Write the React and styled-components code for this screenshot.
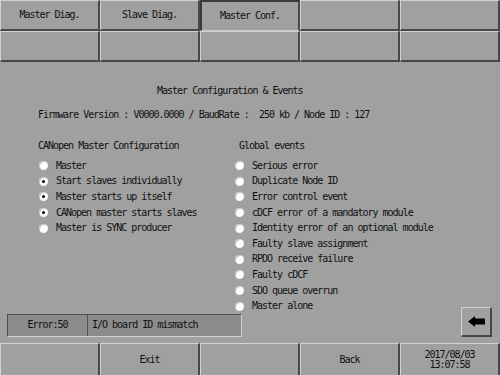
import React from 'react';
import styled, { createGlobalStyle } from 'styled-components';

const GlobalStyle = createGlobalStyle`
  body {
    margin: 0;
    background: #a0a0a0;
  }
`;

const Screen = styled.div`
  width: 500px;
  height: 375px;
  display: flex;
  flex-direction: column;
  overflow: hidden;
  background: #a0a0a0;
  color: #101010;
  font-family: "DejaVu Sans Mono", "Liberation Mono", monospace;
  font-size: 10px;
  letter-spacing: -1px;
`;

const ButtonGrid = styled.div`
  display: grid;
  grid-template-columns: repeat(5, 100px);
  grid-auto-rows: ${(p) => p.$rowHeight}px;
`;

const PanelButton = styled.div`
  box-sizing: border-box;
  display: flex;
  flex-direction: column;
  align-items: center;
  justify-content: center;
  line-height: 10px;
  background: #a0a0a0;
  border-style: solid;
  border-width: 1px 2px 2px 1px;
  border-color: #d2d2d2 #484848 #484848 #d2d2d2;
  ${(p) =>
    p.$active &&
    `
    border-width: 2px 2px 1px 2px;
    border-color: #3a3a3a #484848 #c8c8c8 #3a3a3a;
  `}
  ${(p) => p.$open && `border-bottom-width: 0;`}
`;

const Main = styled.div`
  flex: 1;
  display: flex;
  flex-direction: column;
  padding-top: 23px;
  line-height: 12px;
`;

const Title = styled.div`
  padding-left: 157px;
`;

const InfoLine = styled.div`
  margin-top: 12px;
  padding-left: 38px;
  white-space: pre;
`;

const Columns = styled.div`
  margin-top: 19px;
  display: grid;
  grid-template-columns: 197px 1fr;
  padding-left: 38px;
`;

const Header = styled.div`
  padding-left: ${(p) => p.$indent || 0}px;
  margin-bottom: 6px;
`;

const RadioList = styled.div`
  display: flex;
  flex-direction: column;
  padding-left: ${(p) => p.$indent || 0}px;
`;

const RadioRow = styled.div`
  height: 15.6px;
  display: flex;
  align-items: center;
  gap: 8px;
`;

const Radio = styled.span`
  box-sizing: border-box;
  width: 9px;
  height: 9px;
  border-radius: 50%;
  background: #fdfdfd;
  box-shadow: inset 1px 1px 0 #c4c4c4;
  display: flex;
  align-items: center;
  justify-content: center;
  flex-shrink: 0;

  &::after {
    content: '';
    width: 3px;
    height: 3px;
    border-radius: 50%;
    background: ${(p) => (p.$checked ? '#000' : 'transparent')};
  }
`;

const Footer = styled.div`
  margin-top: -7px;
  display: flex;
  align-items: flex-end;
  padding-left: 7px;
  padding-right: 8px;
`;

const ErrorBox = styled.div`
  box-sizing: border-box;
  width: 235px;
  height: 23px;
  display: grid;
  grid-template-columns: 79px 1fr;
  background: #8b8b8b;
  border-style: solid;
  border-width: 1px;
  border-color: #505050 #d0d0d0 #d0d0d0 #505050;
`;

const ErrorCell = styled.div`
  display: flex;
  align-items: center;
  justify-content: ${(p) => (p.$center ? 'center' : 'flex-start')};
  padding-left: ${(p) => (p.$center ? 0 : 4)}px;
  border-left: ${(p) => (p.$center ? 'none' : '1px solid #505050')};
`;

const ArrowButton = styled.div`
  box-sizing: border-box;
  margin-left: auto;
  width: 31px;
  height: 30px;
  display: flex;
  align-items: center;
  justify-content: center;
  background: #a0a0a0;
  border-style: solid;
  border-width: 1px 2px 2px 1px;
  border-color: #d2d2d2 #484848 #484848 #d2d2d2;
`;

const leftOptions = [
  ['Master', false],
  ['Start slaves individually', true],
  ['Master starts up itself', true],
  ['CANopen master starts slaves', true],
  ['Master is SYNC producer', false],
];

const globalEvents = [
  'Serious error',
  'Duplicate Node ID',
  'Error control event',
  'cDCF error of a mandatory module',
  'Identity error of an optional module',
  'Faulty slave assignment',
  'RPDO receive failure',
  'Faulty cDCF',
  'SDO queue overrun',
  'Master alone',
];

const App = () => {
  const tabs = ['Master Diag.', 'Slave Diag.', 'Master Conf.', '', ''];

  return (
    <Screen>
      <GlobalStyle />
      <ButtonGrid $rowHeight={31}>
        {tabs.map((t, i) => (
          <PanelButton key={i} $active={i === 2}>
            {t}
          </PanelButton>
        ))}
        {[0, 1, 2, 3, 4].map((i) => (
          <PanelButton key={'r' + i} />
        ))}
      </ButtonGrid>

      <Main>
        <Title>Master Configuration &amp; Events</Title>
        <InfoLine>Firmware Version : V0000.0000 / BaudRate :  250 kb / Node ID : 127</InfoLine>

        <Columns>
          <div>
            <Header>CANopen Master Configuration</Header>
            <RadioList $indent={1}>
              {leftOptions.map(([label, checked]) => (
                <RadioRow key={label}>
                  <Radio $checked={checked} />
                  <span>{label}</span>
                </RadioRow>
              ))}
            </RadioList>
          </div>
          <div>
            <Header $indent={4}>Global events</Header>
            <RadioList>
              {globalEvents.map((label) => (
                <RadioRow key={label}>
                  <Radio />
                  <span>{label}</span>
                </RadioRow>
              ))}
            </RadioList>
          </div>
        </Columns>

        <Footer>
          <ErrorBox>
            <ErrorCell $center>Error:50</ErrorCell>
            <ErrorCell>I/O board ID mismatch</ErrorCell>
          </ErrorBox>
          <ArrowButton>
            <svg width="17" height="11" viewBox="0 0 17 11">
              <polygon points="0,5.5 7,0 7,2.5 17,2.5 17,8.5 7,8.5 7,11" fill="#000" />
            </svg>
          </ArrowButton>
        </Footer>
      </Main>

      <ButtonGrid $rowHeight={32}>
        <PanelButton $open />
        <PanelButton $open>Exit</PanelButton>
        <PanelButton $open />
        <PanelButton $open>Back</PanelButton>
        <PanelButton $open>
          <span>2017/08/03</span>
          <span>13:07:58</span>
        </PanelButton>
      </ButtonGrid>
    </Screen>
  );
};

export default App;
